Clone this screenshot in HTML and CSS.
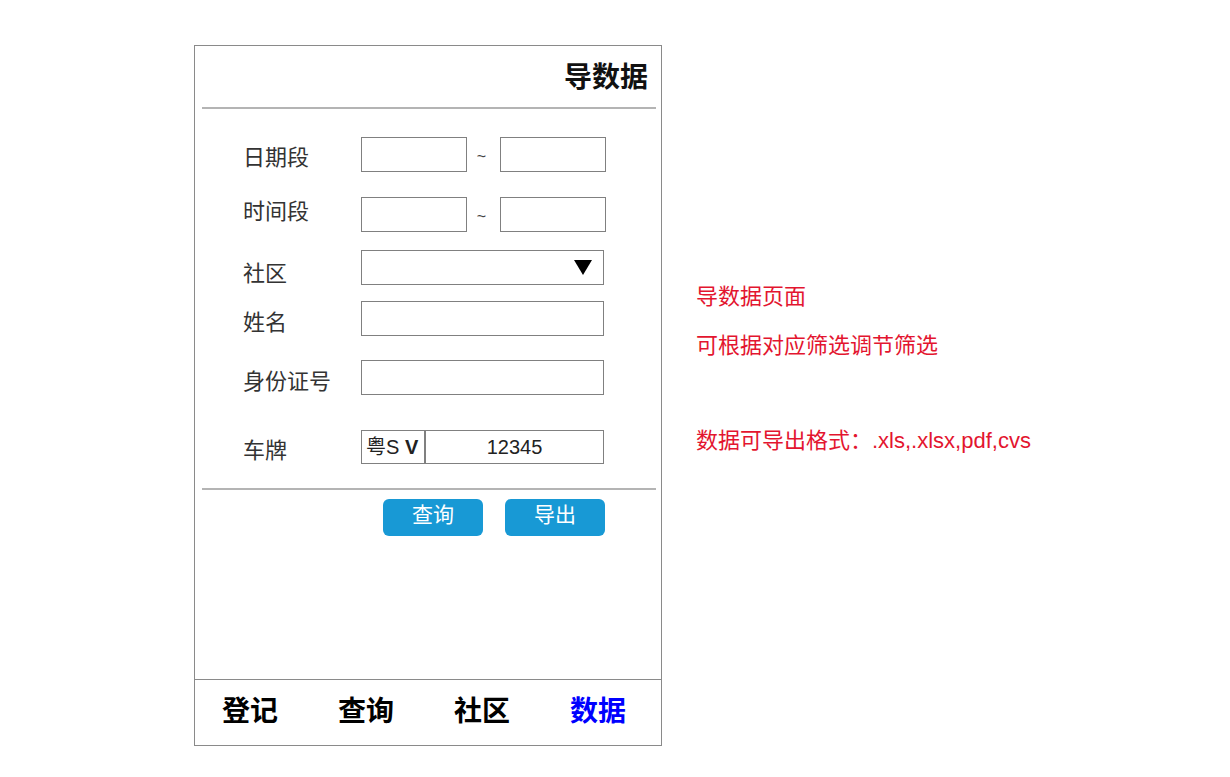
FILE: index.html
```html
<!DOCTYPE html>
<html lang="zh-CN">
<head>
<meta charset="utf-8">
<title>导数据</title>
<link rel="stylesheet" href="styles.css">
</head>
<body>
<div class="page">
  <div class="phone">
    <div class="header"><span class="title">导数据</span></div>
    <div class="rule"></div>
    <div class="form">
      <div class="row r1">
        <span class="label">日期段</span>
        <div class="controls"><span class="box short"></span><span class="tilde">~</span><span class="box short"></span></div>
      </div>
      <div class="row r2">
        <span class="label">时间段</span>
        <div class="controls"><span class="box short"></span><span class="tilde">~</span><span class="box short"></span></div>
      </div>
      <div class="row r3">
        <span class="label">社区</span>
        <div class="controls"><span class="box wide select"><svg class="caret" width="18" height="15" viewBox="0 0 18 15"><polygon points="0,0 18,0 9,15" fill="#000"/></svg></span></div>
      </div>
      <div class="row r4">
        <span class="label">姓名</span>
        <div class="controls"><span class="box wide"></span></div>
      </div>
      <div class="row r5">
        <span class="label">身份证号</span>
        <div class="controls"><span class="box wide"></span></div>
      </div>
      <div class="row r6">
        <span class="label">车牌</span>
        <div class="controls">
          <div class="plate">
            <span class="province">粤S <b>V</b></span>
            <span class="number">12345</span>
          </div>
        </div>
      </div>
    </div>
    <div class="rule"></div>
    <div class="actions">
      <button class="btn">查询</button>
      <button class="btn">导出</button>
    </div>
    <div class="spacer"></div>
    <nav class="tabbar">
      <span class="tab">登记</span>
      <span class="tab">查询</span>
      <span class="tab">社区</span>
      <span class="tab active">数据</span>
    </nav>
  </div>
  <div class="notes">
    <p class="note n1">导数据页面</p>
    <p class="note n2">可根据对应筛选调节筛选</p>
    <p class="note n3">数据可导出格式：.xls,.xlsx,pdf,cvs</p>
  </div>
</div>
</body>
</html>
```

FILE: styles.css
```css
* { box-sizing: border-box; }
html, body { margin: 0; padding: 0; background: #fff; }
body {
  font-family: "Liberation Sans", "Noto Sans CJK SC", sans-serif;
  color: #333;
}
.page {
  display: flex;
  align-items: flex-start;
  padding: 45px 0 0 194px;
}
.phone {
  width: 468px;
  height: 701px;
  border: 1px solid #8a8a8a;
  display: flex;
  flex-direction: column;
}
.header {
  height: 61px;
  display: flex;
  align-items: center;
  justify-content: flex-end;
  padding: 2px 13px 0 0;
}
.title {
  font-size: 28px;
  font-weight: bold;
  color: #111;
  line-height: 30px;
}
.rule {
  height: 2px;
  background: #b4b4b4;
  margin: 0 5px 0 7px;
  flex: none;
}
.form {
  padding: 28px 0 0 48px;
  margin-bottom: 24px;
}
.row {
  display: flex;
  align-items: flex-start;
}
.label {
  width: 118px;
  flex: none;
  font-size: 22px;
  line-height: 24px;
  color: #333;
}
.controls {
  display: flex;
  align-items: center;
}
.box {
  display: block;
  height: 35px;
  border: 1px solid #808080;
  background: #fff;
}
.short { width: 106px; }
.wide { width: 243px; }
.tilde {
  width: 33px;
  text-align: center;
  font-size: 16px;
  color: #444;
  padding: 4px 4px 0 0;
}
.select {
  display: flex;
  align-items: center;
  justify-content: flex-end;
  padding-right: 11px;
}
.caret { display: block; }
.r1 { margin-bottom: 25px; }
.r1 .label { padding-top: 9px; }
.r2 { margin-bottom: 18px; }
.r2 .label { padding-top: 3px; }
.r3 { margin-bottom: 15px; }
.r3 .label { padding-top: 12px; }
.r4 { margin-bottom: 24px; }
.r4 .label { padding-top: 10px; }
.r5 { margin-bottom: 35px; }
.r5 .label { padding-top: 10px; }
.r6 .label { padding-top: 9px; }
.plate {
  width: 243px;
  height: 34px;
  border: 1px solid #808080;
  display: flex;
}
.province {
  width: 64px;
  border-right: 2px solid #808080;
  font-size: 20px;
  line-height: 32px;
  padding-left: 4px;
  color: #222;
  white-space: nowrap;
}
.province b { color: #222; }
.number {
  flex: 1;
  text-align: center;
  font-size: 20px;
  line-height: 32px;
  color: #222;
}
.actions {
  display: flex;
  gap: 22px;
  padding: 9px 0 0 188px;
}
.btn {
  width: 100px;
  height: 37px;
  border: none;
  border-radius: 6px;
  background: #1899d5;
  color: #fff;
  font-family: "Liberation Sans", "Noto Sans CJK SC", sans-serif;
  font-size: 21px;
  line-height: 30px;
  padding: 0 0 5px;
}
.spacer { flex: 1; }
.tabbar {
  height: 66px;
  border-top: 1px solid #8a8a8a;
  display: flex;
  gap: 60px;
  padding: 17px 0 0 27px;
  flex: none;
}
.tab {
  width: 56px;
  font-size: 28px;
  font-weight: bold;
  line-height: 30px;
  color: #000;
  white-space: nowrap;
}
.tab.active { color: #0000ff; }
.notes {
  margin-left: 34px;
  padding-top: 240px;
}
.note {
  margin: 0;
  font-size: 22px;
  line-height: 24px;
  color: #e3152f;
  white-space: nowrap;
}
.n2 { margin-top: 25px; }
.n3 { margin-top: 71px; }
```
